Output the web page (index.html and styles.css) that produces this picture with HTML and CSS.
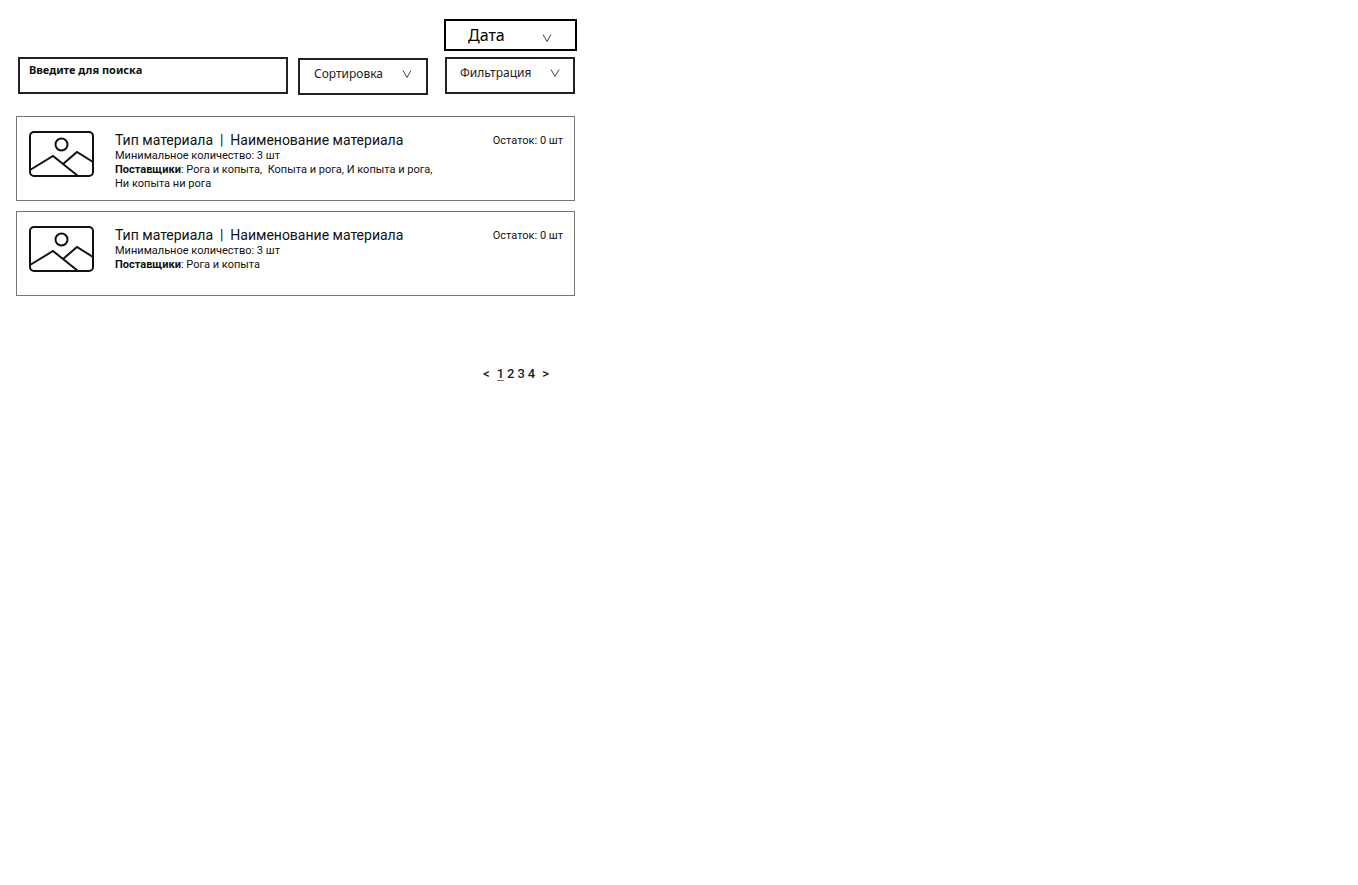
FILE: index.html
```html
<!DOCTYPE html>
<html lang="ru">
<head>
<meta charset="utf-8">
<meta name="viewport" content="width=device-width, initial-scale=1">
<title>Материалы</title>
<link rel="stylesheet" href="styles.css">
</head>
<body>
<main class="page">
  <div class="date-row">
    <div class="dropdown dropdown-date">
      <select class="dropdown-select" aria-label="Дата"><option>Дата</option></select>
      <svg class="chevron" viewBox="0 0 10 10" aria-hidden="true"><path d="M1 1.500L5 8.500L9 1.500"/></svg>
    </div>
  </div>
  <div class="toolbar">
    <input class="search" type="search" placeholder="Введите для поиска" aria-label="Введите для поиска">
    <div class="dropdown dropdown-sort">
      <select class="dropdown-select" aria-label="Сортировка"><option>Сортировка</option></select>
      <svg class="chevron" viewBox="0 0 10 10" aria-hidden="true"><path d="M1 1.500L5 8.500L9 1.500"/></svg>
    </div>
    <div class="dropdown dropdown-filter">
      <select class="dropdown-select" aria-label="Фильтрация"><option>Фильтрация</option></select>
      <svg class="chevron" viewBox="0 0 10 10" aria-hidden="true"><path d="M1 1.500L5 8.500L9 1.500"/></svg>
    </div>
  </div>

  <div class="cards">
    <article class="card">
      <svg class="thumb" viewBox="0 0 66 46" aria-hidden="true"><rect x="1" y="1" width="63" height="44" rx="4"/><circle cx="32.500" cy="13.500" r="6"/><path d="M1 39L24 25L49 45M34 33L48 21L64 31"/></svg>
      <div class="card-body">
        <h2 class="card-title">Тип материала&nbsp; |&nbsp; Наименование материала</h2>
        <p class="card-line">Минимальное количество: 3 шт</p>
        <p class="card-line"><strong>Поставщики</strong>: Рога и копыта,&nbsp; Копыта и рога, И копыта и рога, Ни&nbsp;копыта ни рога</p>
      </div>
      <p class="card-stock">Остаток: 0 шт</p>
    </article>
    <article class="card">
      <svg class="thumb" viewBox="0 0 66 46" aria-hidden="true"><rect x="1" y="1" width="63" height="44" rx="4"/><circle cx="32.500" cy="13.500" r="6"/><path d="M1 39L24 25L49 45M34 33L48 21L64 31"/></svg>
      <div class="card-body">
        <h2 class="card-title">Тип материала&nbsp; |&nbsp; Наименование материала</h2>
        <p class="card-line">Минимальное количество: 3 шт</p>
        <p class="card-line"><strong>Поставщики</strong>: Рога и копыта</p>
      </div>
      <p class="card-stock">Остаток: 0 шт</p>
    </article>
  </div>

  <nav class="pager" aria-label="Страницы">
    <a class="pager-arrow" href="#prev" aria-label="Назад">&lt;</a>
    <div class="pager-pages">
      <a class="pager-link pager-current" href="#1" aria-current="page">1</a>
      <a class="pager-link" href="#2">2</a>
      <a class="pager-link" href="#3">3</a>
      <a class="pager-link" href="#4">4</a>
    </div>
    <a class="pager-arrow" href="#next" aria-label="Вперёд">&gt;</a>
  </nav>
</main>
</body>
</html>
```
FILE: styles.css
```css
*, *::before, *::after { box-sizing: border-box; }

body {
  margin: 0;
  background: #fff;
  color: #111;
  font-family: Roboto, "Liberation Sans", sans-serif;
}

.page {
  max-width: 593px;
  padding: 19px 16px;
}

.date-row {
  display: flex;
  justify-content: flex-end;
}

.toolbar {
  display: flex;
  gap: 10px;
  margin-top: 6px;
  padding: 0 2px;
}

.search {
  flex: 1;
  min-width: 0;
  height: 37px;
  border: 2px solid #222;
  border-radius: 0;
  background: #fff;
  padding: 0 9px 12px;
  font: bold 11px "Noto Sans", sans-serif;
  color: #111;
  appearance: none;
}

.search::placeholder {
  color: #111;
  opacity: 1;
}

.dropdown {
  display: grid;
  width: 130px;
  height: 37px;
  border: 2px solid #222;
}

.dropdown-select {
  grid-area: 1 / 1;
  appearance: none;
  border: 0;
  border-radius: 0;
  background: transparent;
  padding: 0 32px 6px 14px;
  font: 12px "Noto Sans", sans-serif;
  color: #222;
}

.chevron {
  grid-area: 1 / 1;
  align-self: center;
  justify-self: end;
  width: 10px;
  height: 10px;
  margin: 0 14px 6px 0;
  fill: none;
  stroke: #444;
  stroke-width: 1;
  pointer-events: none;
}

.dropdown-date {
  width: 133px;
  height: 32px;
  border-color: #000;
}

.dropdown-date .dropdown-select {
  padding: 0 40px 0 22px;
  font-size: 16px;
  color: #000;
}

.dropdown-date .chevron {
  margin: 6px 23px 0 0;
}

.dropdown-sort {
  margin-top: 1px;
}

.dropdown-filter {
  margin-left: 7px;
}

.dropdown-filter .dropdown-select {
  padding-left: 13px;
}

.dropdown-filter .chevron {
  margin-right: 13px;
}

.cards {
  display: grid;
  gap: 10px;
  margin: 21px 2px 0 0;
}

.card {
  display: flex;
  min-height: 85px;
  padding: 14px 11px 8px 12px;
  border: 1px solid #777;
}

.thumb {
  flex: none;
  width: 66px;
  height: 46px;
  margin-right: 20px;
  fill: none;
  stroke: #111;
  stroke-width: 2;
}

.card-body {
  flex: 1;
  max-width: 340px;
}

.card-title {
  margin: 0;
  font-size: 14px;
  font-weight: 400;
  line-height: 18px;
}

.card-line {
  margin: 0;
  font-size: 11px;
  line-height: 14px;
}

.card-stock {
  margin: 0 0 0 auto;
  font-size: 11px;
  line-height: 20px;
}

.pager {
  display: flex;
  justify-content: flex-end;
  gap: 7px;
  margin: 72px 28px 0 0;
  font-size: 13px;
  font-weight: 500;
  line-height: 12px;
}

.pager-pages {
  display: flex;
  gap: 3px;
}

.pager-link, .pager-arrow {
  color: #222;
  text-decoration: none;
}

.pager-current {
  border-bottom: 1px solid #777;
}
```
